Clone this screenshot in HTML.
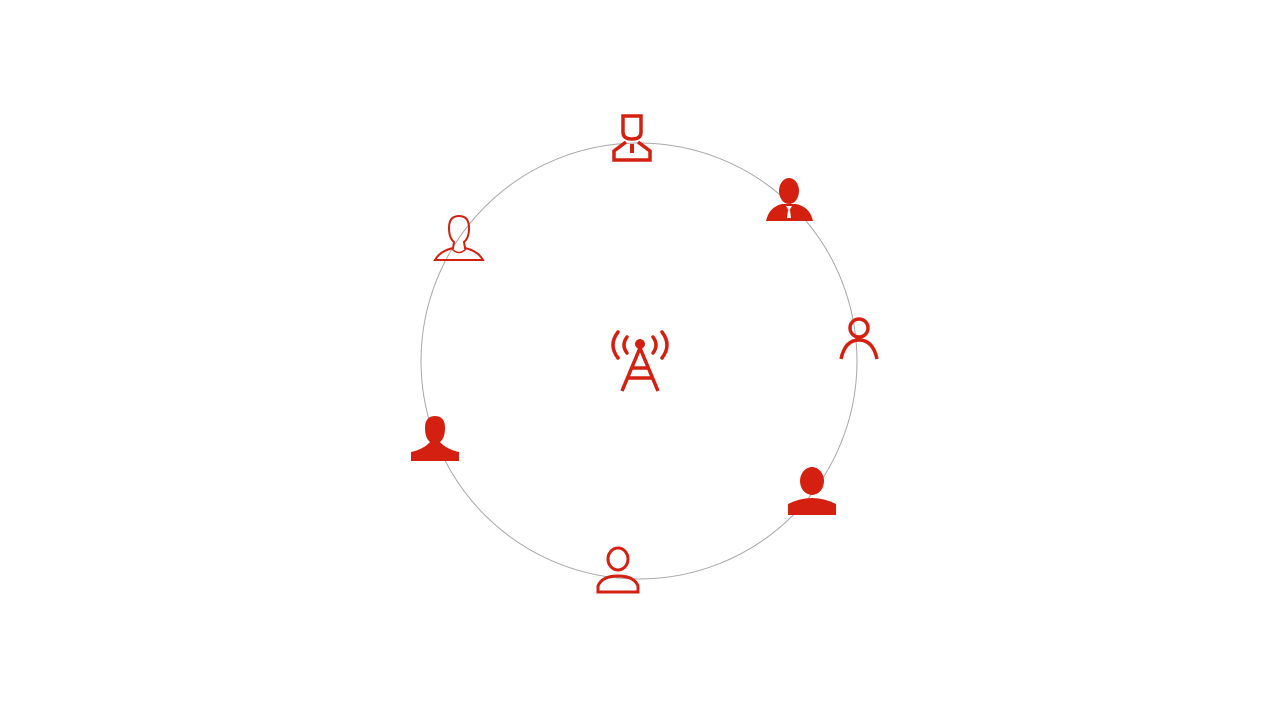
<!DOCTYPE html>
<html><head><meta charset="utf-8"><style>html,body{margin:0;padding:0;background:#fff;width:1280px;height:720px;overflow:hidden}</style></head>
<body>
<svg width="1280" height="720" viewBox="0 0 1280 720">
<circle cx="639" cy="361" r="218" fill="none" stroke="#a8a8a8" stroke-width="1"/>
<g fill="#d42010" stroke="#d42010">
<!-- tower -->
<g fill="none" stroke-width="3.5" stroke-linecap="round">
<path d="M618 332 Q608 345 618 358"/><path d="M662 332 Q672 345 662 358"/>
<path d="M627 337 Q621 345 627 353"/><path d="M653 337 Q659 345 653 353"/>
</g>
<circle cx="640" cy="344" r="5" stroke="none"/>
<path d="M640 348 L622 391 M640 348 L658 391 M631 368 L649 368 M627 378 L653 378" fill="none" stroke-width="3.5"/>
<!-- top: outlined suit -->
<path d="M623 116 L641 116 L641 132 Q641 139 632 139 Q623 139 623 132 Z" fill="none" stroke-width="3.5"/>
<path d="M626 142 L614 151 L614 160 L650 160 L650 151 L638 142" fill="none" stroke-width="3.5"/>
<rect x="630" y="144" width="4" height="9" stroke="none"/>
<!-- top-right filled suit -->
<ellipse cx="789" cy="191" rx="10" ry="13" stroke="none"/>
<path d="M766 221 Q769 207 782 204 L796 204 Q810 207 813 221 Z" stroke="none"/>
<path d="M786 206 L789 211 L792 206 Z M788 210 L790 210 L791 218 L787 218 Z" fill="#fff" stroke="none"/>
<!-- right outlined -->
<circle cx="859" cy="328" r="9" fill="none" stroke-width="3.5"/>
<path d="M841 359 Q845 340 859 340 Q873 340 877 359" fill="none" stroke-width="3.5"/>
<!-- bottom-right filled -->
<ellipse cx="812" cy="481" rx="12" ry="14" stroke="none"/>
<path d="M788 515 L788 504 Q800 498 812 498 Q824 498 836 504 L836 515 Z" stroke="none"/>
<!-- bottom outlined -->
<ellipse cx="618" cy="559" rx="10" ry="11" fill="none" stroke-width="3"/>
<path d="M598 592 L598 586 Q602 576 618 576 Q634 576 638 586 L638 592 Z" fill="none" stroke-width="3"/>
<!-- left filled -->
<path d="M435 416 Q445 416 445 428 Q445 438 440 442 Q446 449 459 452 L459 461 L411 461 L411 452 Q424 449 430 442 Q425 438 425 428 Q425 416 435 416 Z" stroke="none"/>
<!-- top-left outlined -->
<path d="M459 216 Q469 216 469 228 Q469 238 464 242 L465 248 Q478 251 483 260 L435 260 Q440 251 453 248 L454 242 Q449 238 449 228 Q449 216 459 216 Z" fill="none" stroke-width="2"/>
<path d="M452 249 Q459 256 466 249" fill="none" stroke-width="1.5"/>
</g>
</svg>
</body></html>
